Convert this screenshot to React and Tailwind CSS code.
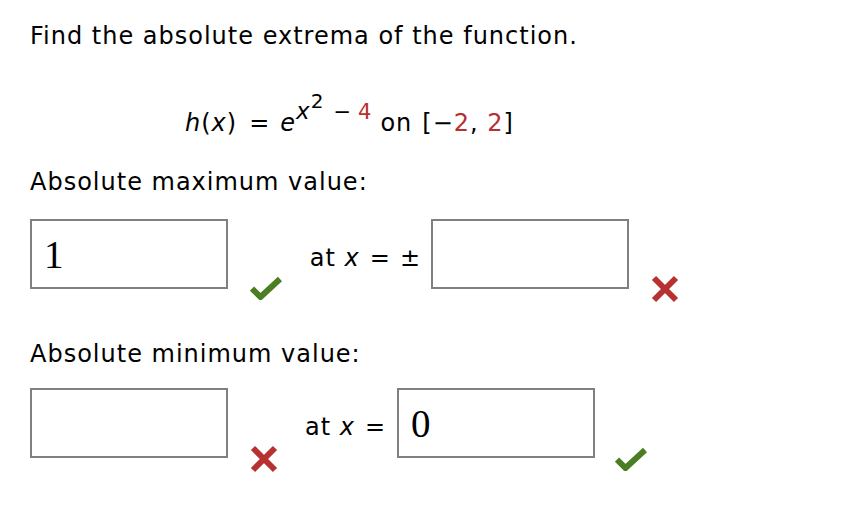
import React from "react";

const Check = () => (
  <svg width="32" height="24" viewBox="0 0 32 24" className="block">
    <polyline points="2,12.5 10.5,21 30,3" fill="none" stroke="#4b7d22" strokeWidth="6" strokeLinejoin="miter" />
  </svg>
);

const Cross = () => (
  <svg width="28" height="28" viewBox="0 0 28 28" className="block">
    <path d="M3 3 L25 25 M25 3 L3 25" fill="none" stroke="#b83131" strokeWidth="6" />
  </svg>
);

const Box = ({ value }) => (
  <div className="w-[198px] h-[70px] border-2 border-[#808080] bg-white flex items-center pl-[12px] shrink-0">
    {value ? (
      <span className="text-[39px] leading-none text-black tracking-normal" style={{ fontFamily: '"Liberation Serif", serif' }}>
        {value}
      </span>
    ) : null}
  </div>
);

export default function App() {
  return (
    <div
      className="w-[860px] h-[512px] bg-white text-black text-[24px] leading-[28px] tracking-[1px] pl-[30px] pt-[22px]"
      style={{ fontFamily: '"DejaVu Sans", Verdana, sans-serif' }}
    >
      <div>Find the absolute extrema of the function.</div>

      <div className="mt-[41px] h-[28px] pl-[155px] whitespace-nowrap">
        <i>h</i>(<i>x</i>)<span className="ml-[12px]">=</span>
        <i className="ml-[10px]">e</i>
        <span className="text-[23px] leading-none align-[12px]">
          <i>x</i>
          <span className="text-[20px] leading-none align-[11px]">2</span>
          <span className="text-[21px] ml-[9px]">−</span>
          <span className="text-[21px] ml-[6px] text-[#b5302e]">4</span>
        </span>
        <span className="ml-[8px]">on</span>
        <span className="ml-[10px]">[−</span>
        <span className="text-[#b5302e]">2</span>, <span className="text-[#b5302e]">2</span>]
      </div>

      <div className="mt-[49px]">Absolute maximum value:</div>

      <div className="mt-[23px] flex items-start">
        <Box value="1" />
        <div className="ml-[22px] w-[31px] mt-[57px]">
          <Check />
        </div>
        <div className="w-[150px] h-[70px] pt-[25px] pr-[10px] flex justify-end whitespace-nowrap">
          <span>
            at <i>x</i>
            <span className="ml-[10px]">=</span>
            <span className="ml-[9px]">±</span>
          </span>
        </div>
        <Box />
        <div className="ml-[22px] mt-[56px]">
          <Cross />
        </div>
      </div>

      <div className="mt-[37px]">Absolute minimum value:</div>

      <div className="mt-[20px] flex items-start">
        <Box />
        <div className="ml-[22px] w-[27px] mt-[57px]">
          <Cross />
        </div>
        <div className="w-[120px] h-[70px] pt-[25px] pr-[11px] flex justify-end whitespace-nowrap">
          <span>
            at <i>x</i>
            <span className="ml-[10px]">=</span>
          </span>
        </div>
        <Box value="0" />
        <div className="ml-[20px] mt-[59px]">
          <Check />
        </div>
      </div>
    </div>
  );
}
